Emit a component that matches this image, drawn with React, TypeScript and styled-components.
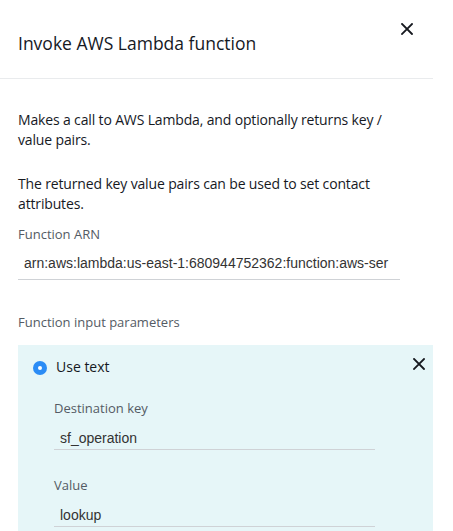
import styled, { createGlobalStyle } from "styled-components";

const GlobalStyle = createGlobalStyle`
  html, body {
    margin: 0;
    padding: 0;
    background: #ffffff;
  }
  body {
    font-family: "Open Sans", "Noto Sans", sans-serif;
    color: #16191f;
  }
`;

type Spacing = "loose" | "tight";

const spacingMap: Record<Spacing, { top: number; bottom: number }> = {
  loose: { top: 11, bottom: 7 },
  tight: { top: 12, bottom: 2 },
};

const CloseIcon = ({ size = 12 }: { size?: number }) => (
  <svg
    width={size}
    height={size}
    viewBox="0 0 12 12"
    fill="none"
    stroke="#16191f"
    strokeWidth={1.8}
    strokeLinecap="square"
  >
    <path d="M1 1 L11 11 M11 1 L1 11" />
  </svg>
);

type FieldProps = {
  label: string;
  value: string;
  width: number;
  spacing?: Spacing;
};

const Field = ({ label, value, width, spacing = "tight" }: FieldProps) => (
  <FieldWrapper>
    <Label>{label}</Label>
    <Input
      $width={width}
      $spacing={spacing}
      readOnly
      value={value}
    />
  </FieldWrapper>
);

const App = () => (
  <>
    <GlobalStyle />
    <Panel>
      <Header>
        <Title>Invoke AWS Lambda function</Title>
        <CloseButton aria-label="Close">
          <CloseIcon />
        </CloseButton>
      </Header>
      <Body>
        <Paragraph>
          Makes a call to AWS Lambda, and optionally returns key / value pairs.
        </Paragraph>
        <Paragraph>
          The returned key value pairs can be used to set contact attributes.
        </Paragraph>
        <Field
          label="Function ARN"
          value="arn:aws:lambda:us-east-1:680944752362:function:aws-ser"
          width={382}
          spacing="loose"
        />
        <SectionLabel>Function input parameters</SectionLabel>
        <ParamCard>
          <CardHeader>
            <Radio />
            <RadioLabel>Use text</RadioLabel>
            <CardClose aria-label="Remove">
              <CloseIcon />
            </CardClose>
          </CardHeader>
          <CardFields>
            <Field
              label="Destination key"
              value="sf_operation"
              width={321}
            />
            <Field
              label="Value"
              value="lookup"
              width={321}
            />
          </CardFields>
        </ParamCard>
      </Body>
    </Panel>
  </>
);

const Panel = styled.div`
  width: 433px;
  height: 531px;
  overflow: hidden;
`;

const Header = styled.div`
  display: flex;
  justify-content: space-between;
  align-items: flex-start;
  height: 79px;
  border-bottom: 1px solid #e9ebed;
  box-sizing: border-box;
  padding: 0 20px 0 18px;
`;

const Title = styled.h2`
  margin: 31px 0 0;
  font-size: 17.5px;
  font-weight: 400;
  line-height: 24px;
  color: #16191f;
`;

const CloseButton = styled.button`
  display: flex;
  margin-top: 23px;
  padding: 0;
  border: none;
  background: transparent;
`;

const Body = styled.div`
  display: flex;
  flex-direction: column;
  padding: 31px 0 0 18px;
`;

const Paragraph = styled.p`
  margin: 0 0 24px;
  width: 380px;
  font-size: 14px;
  line-height: 20px;
  letter-spacing: -0.15px;

  & + & {
    margin-bottom: 11px;
  }
`;

const FieldWrapper = styled.div`
  display: flex;
  flex-direction: column;
`;

const Label = styled.label`
  font-size: 13px;
  line-height: 18px;
  color: #545b64;
`;

const Input = styled.input<{ $width: number; $spacing: Spacing }>`
  width: ${({ $width }) => $width}px;
  box-sizing: content-box;
  max-width: ${({ $width }) => $width - 12}px;
  margin-top: ${({ $spacing }) => spacingMap[$spacing].top}px;
  padding: 0 6px ${({ $spacing }) => spacingMap[$spacing].bottom}px;
  height: 18px;
  border: none;
  border-bottom: 1px solid #cfd2d6;
  background: transparent;
  font-family: "Liberation Sans", Arial, sans-serif;
  font-size: 14px;
  line-height: 18px;
  color: #333333;
  outline: none;
`;

const SectionLabel = styled(Label)`
  margin-top: 33px;
`;

const ParamCard = styled.div`
  width: 415px;
  margin-top: 14px;
  background: #e6f6f8;
  padding: 14px 8px 20px 15px;
  box-sizing: border-box;
  min-height: 200px;
`;

const CardHeader = styled.div`
  display: flex;
  align-items: center;
  height: 18px;
`;

const Radio = styled.span`
  width: 14px;
  height: 14px;
  border-radius: 50%;
  background: #2b8cf5;
  display: flex;
  align-items: center;
  justify-content: center;

  &::after {
    content: "";
    width: 4px;
    height: 4px;
    border-radius: 50%;
    background: #ffffff;
  }
`;

const RadioLabel = styled.span`
  margin: 0 0 3px 9px;
  font-size: 14px;
  line-height: 18px;
`;

const CardClose = styled.button`
  display: flex;
  margin-left: auto;
  margin-top: -8px;
  padding: 0;
  border: none;
  background: transparent;
`;

const CardFields = styled.div`
  display: flex;
  flex-direction: column;
  gap: 26px;
  margin-top: 22px;
  padding-left: 21px;
`;

export default App;
